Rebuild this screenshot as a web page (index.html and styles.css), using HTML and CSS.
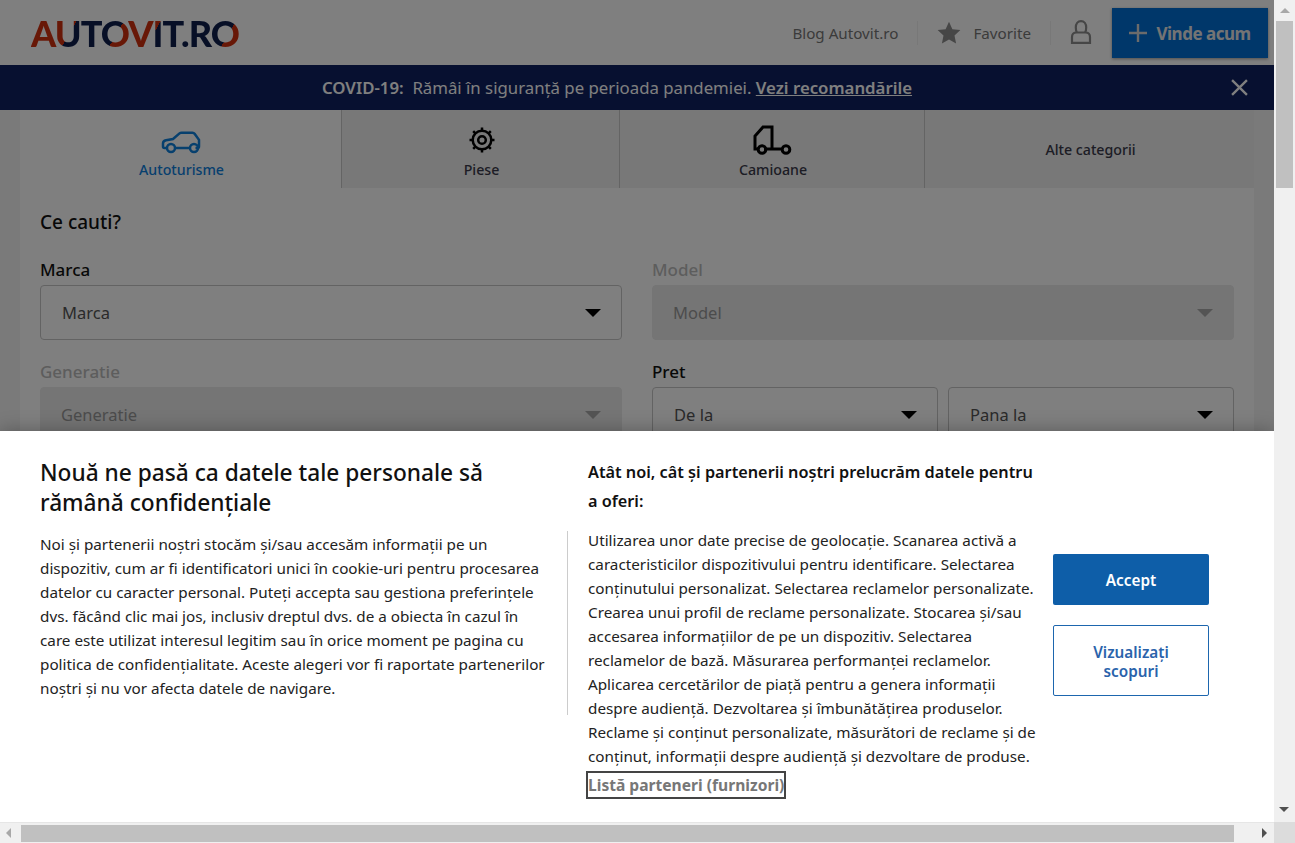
FILE: index.html
```html
<!DOCTYPE html>
<html lang="ro">
<head>
<meta charset="utf-8">
<title>Autovit.ro</title>
<link rel="stylesheet" href="styles.css">
</head>
<body>
<div class="window">
  <div class="viewport">
    <header class="header">
      <div class="logo">AUTOVIT.RO</div>
      <nav class="nav">
        <a class="nav-link">Blog Autovit.ro</a>
        <span class="nav-sep"></span>
        <a class="nav-link nav-fav">
          <svg class="star" viewBox="0 0 24 24"><path d="M12 .8l3.400 7.400 8 .9-5.900 5.500 1.600 8-7.100-4-7.100 4 1.600-8L.6 9.100l8-.9z"/></svg>
          Favorite
        </a>
        <span class="nav-sep"></span>
        <svg class="user" viewBox="0 0 22 24"><path d="M7 12.500C6 11.500 5.800 9.500 5.800 7.500c0-3.500 2-6.300 5.200-6.300s5.200 2.800 5.200 6.300c0 2-.2 4-1.200 5M2 22.800V17c0-2.800 1.800-4.500 4.500-4.500h9c2.700 0 4.500 1.700 4.500 4.500v5.800z"/></svg>
        <a class="sell">
          <svg class="plus" viewBox="0 0 18 18"><path d="M9 0v18M0 9h18"/></svg>
          Vinde acum
        </a>
      </nav>
    </header>
    <div class="banner">
      <p class="banner-text"><b>COVID-19:</b>&nbsp; Rămâi în siguranță pe perioada pandemiei. <a>Vezi recomandările</a></p>
      <svg class="banner-close" viewBox="0 0 16 16"><path d="M1 1l14 14M15 1L1 15"/></svg>
    </div>
    <main class="main">
      <div class="tabs">
        <div class="tab tab-active tab-auto">
          <svg class="tab-icon" width="42" height="24" viewBox="0 0 42 24"><path d="M6 18H3.500c-1 0-1.500-.6-1.500-1.500v-3c0-1.800 1.200-2.800 3-3.200l7-1.300 6.500-5.600c.6-.5 1.100-.7 2-.7h11c1 0 1.600.3 2.100 1l4.400 6.100v6.700c0 1-.5 1.500-1.500 1.500h-2M14 18h15"/><circle cx="10" cy="18" r="4"/><circle cx="33" cy="18" r="4"/></svg>
          <span>Autoturisme</span>
        </div>
        <div class="tab tab-piese">
          <svg class="tab-icon" width="26" height="26" viewBox="0 0 26 26"><circle cx="13" cy="13" r="9.300"/><circle cx="13" cy="13" r="3.800"/><path class="teeth" d="M13 .5v3.500M13 22v3.500M.5 13H4M22 13h3.500M4.200 4.200l2.400 2.400M19.400 19.400l2.400 2.400M21.800 4.200l-2.400 2.400M6.600 19.400l-2.400 2.400"/></svg>
          <span>Piese</span>
        </div>
        <div class="tab tab-truck">
          <svg class="tab-icon" width="40" height="30" viewBox="0 0 40 30"><path d="M6 24H2V11l8-9h9v22h-8M19 24h9"/><circle cx="9" cy="24.500" r="3.800"/><circle cx="33" cy="24.500" r="3.800"/></svg>
          <span>Camioane</span>
        </div>
        <div class="tab tab-other"><span>Alte categorii</span></div>
      </div>
      <section class="card">
        <h2 class="card-title">Ce cauti?</h2>
        <div class="form">
          <div class="field">
            <label>Marca</label>
            <div class="select"><span>Marca</span><i class="caret"></i></div>
          </div>
          <div class="field field-off">
            <label>Model</label>
            <div class="select"><span>Model</span><i class="caret"></i></div>
          </div>
          <div class="field field-off">
            <label>Generatie</label>
            <div class="select"><span>Generatie</span><i class="caret"></i></div>
          </div>
          <div class="field">
            <label>Pret</label>
            <div class="pair">
              <div class="select"><span>De la</span><i class="caret"></i></div>
              <div class="select"><span>Pana la</span><i class="caret"></i></div>
            </div>
          </div>
        </div>
      </section>
    </main>
    <div class="dim"></div>
    <aside class="cookie">
      <div class="cookie-left">
        <h1>Nouă ne pasă ca datele tale personale să rămână confidențiale</h1>
        <p>Noi și partenerii noștri stocăm și/sau accesăm informații pe un dispozitiv, cum ar fi identificatori unici în cookie-uri pentru procesarea datelor cu caracter personal. Puteți accepta sau gestiona preferințele dvs. făcând clic mai jos, inclusiv dreptul dvs. de a obiecta în cazul în care este utilizat interesul legitim sau în orice moment pe pagina cu politica de confidențialitate. Aceste alegeri vor fi raportate partenerilor noștri și nu vor afecta datele de navigare.</p>
      </div>
      <div class="cookie-rule"></div>
      <div class="cookie-right">
        <h2>Atât noi, cât și partenerii noștri prelucrăm datele pentru a oferi:</h2>
        <p>Utilizarea unor date precise de geolocație. Scanarea activă a caracteristicilor dispozitivului pentru identificare. Selectarea conținutului personalizat. Selectarea reclamelor personalizate. Crearea unui profil de reclame personalizate. Stocarea și/sau accesarea informațiilor de pe un dispozitiv. Selectarea reclamelor de bază. Măsurarea performanței reclamelor. Aplicarea cercetărilor de piață pentru a genera informații despre audiență. Dezvoltarea și îmbunătățirea produselor. Reclame și conținut personalizate, măsurători de reclame și de conținut, informații despre audiență și dezvoltare de produse.</p>
        <a class="partners">Listă parteneri (furnizori)</a>
      </div>
      <div class="cookie-actions">
        <button class="btn btn-primary">Accept</button>
        <button class="btn btn-outline">Vizualizați scopuri</button>
      </div>
    </aside>
  </div>
  <div class="vbar">
    <i class="arrow arrow-up"></i>
    <div class="vtrack"><div class="vthumb"></div></div>
    <i class="arrow arrow-down"></i>
  </div>
  <div class="hbar">
    <i class="arrow arrow-left"></i>
    <div class="htrack"><div class="hthumb"></div></div>
    <i class="arrow arrow-right"></i>
  </div>
  <div class="corner"></div>
</div>
</body>
</html>
```

FILE: styles.css
```css
* { box-sizing: border-box; }
html, body { margin: 0; height: 100%; overflow: hidden; }
body { font-family: "Noto Sans", "Open Sans", sans-serif; color: #111; background: #fff; }
h1, h2, p { margin: 0; }

.window { display: grid; grid-template-columns: 1274px 21px; grid-template-rows: 822px 21px; width: 1295px; height: 843px; }
.viewport { position: relative; overflow: hidden; background: #f4f4f4; }

.header { height: 65px; background: #fff; display: flex; align-items: flex-start; justify-content: space-between; padding: 0 6px 0 31px; }
.logo { margin-top: 14px; width: 211px; font-family: "Lato", sans-serif; font-weight: 900; font-size: 36px; line-height: 38px; letter-spacing: -.9px; white-space: nowrap; color: transparent;
  background: linear-gradient(120deg, #d0300f 0 43px, #0e1f4d 43px 84px, #d0300f 84px 116px, #0e1f4d 116px 181px, #d0300f 181px);
  -webkit-background-clip: text; background-clip: text; }
.nav { display: flex; align-items: center; height: 66px; }
.nav-link { font-size: 15.200px; color: #777; display: flex; align-items: center; }
.nav-sep { width: 1px; height: 24px; background: #f0f0f0; margin: 0 19px; }
.nav-fav { gap: 12px; }
.star { width: 24px; height: 24px; fill: #8d8d8d; }
.user { width: 22px; height: 24px; fill: none; stroke: #8d8d8d; stroke-width: 2.200; margin-right: 20px; margin-top: -2px; }
.sell { height: 50px; width: 156px; background: #006ed4; box-shadow: 0 1px 3px rgba(0,0,0,.4); color: #e8e8e8; font-weight: 700; font-size: 17px; letter-spacing: -.5px; display: flex; align-items: center; justify-content: center; gap: 9px; }
.plus { width: 18px; height: 18px; stroke: #d6d6d6; stroke-width: 2.400; fill: none; }

.banner { position: relative; height: 45px; background: #0e2060; color: #fff; display: flex; align-items: center; justify-content: center; padding-right: 40px; font-size: 16.800px; }
.banner-text b { font-weight: 600; }
.banner-text a { font-weight: 600; text-decoration: underline; }
.banner-close { position: absolute; right: 26px; top: 14px; width: 17px; height: 17px; stroke: #fff; stroke-width: 2.200; fill: none; }

.main { padding: 0 20px; }
.tabs { display: grid; grid-template-columns: 321px 278px 305px 330px; height: 78px; background: #f0f0f0; }
.tab { display: flex; flex-direction: column; align-items: center; justify-content: flex-end; padding: 0 0 9px 2px; font-size: 14.200px; font-weight: 500; color: #3a3a4a; border-left: 1px solid #c8c8c8; }
.tab-active { border-left: 0; background: #fff; color: #0f80dc; }
.tab-icon { fill: none; stroke: #000; stroke-width: 2.500; margin-bottom: 5px; }
.tab-auto .tab-icon { stroke: #0f80dc; margin-bottom: 6px; }
.tab-piese .tab-icon { margin-bottom: 7px; }
.teeth { stroke-width: 2.500; }
.tab-truck .tab-icon { margin-bottom: 5px; stroke-width: 3; }
.tab-other { justify-content: center; padding-bottom: 0; }
.card { background: #fff; padding: 22px 20px 0; height: 500px; }
.card-title { font-size: 19px; font-weight: 500; line-height: 24px; color: #111; margin-bottom: 25px; }
.form { display: grid; grid-template-columns: 582px 582px; column-gap: 30px; row-gap: 21px; }
.field label { display: block; font-size: 17px; font-weight: 500; line-height: 22px; margin-bottom: 4px; color: #111; }
.field-off label { color: #bbb; }
.select { height: 55px; border: 1px solid #c6c6c6; border-radius: 4px; display: flex; align-items: center; justify-content: space-between; padding: 0 20px 0 21px; font-size: 16.500px; color: #555; background: #fff; }
.field-off .select { background: #eaeaea; border-color: #eaeaea; color: #999; padding-left: 20px; }
.caret { width: 0; height: 0; border-left: 8px solid transparent; border-right: 8px solid transparent; border-top: 8px solid #000; }
.field-off .caret { border-top-color: #a8a8a8; }
.pair { display: grid; grid-template-columns: 1fr 1fr; column-gap: 10px; }

.dim { position: absolute; inset: 0; background: rgba(0,0,0,.5); }
.cookie { position: absolute; left: 0; right: 0; bottom: 0; height: 391px; background: #fff; box-shadow: 0 0 18px rgba(0,0,0,.3); display: flex; align-items: flex-start; padding: 27px 65px 0 40px; color: #222; }
.cookie-left { width: 508px; flex: none; }
.cookie-left h1 { font-size: 22.700px; font-weight: 500; line-height: 30px; color: #111; width: 470px; margin-bottom: 14px; }
.cookie-left p { font-size: 15.250px; line-height: 24px; }
.cookie-right p { font-size: 15.250px; line-height: 24px; margin-right: -8px; }
.cookie-rule { width: 1px; height: 184px; background: #ccc; margin: 73px 20px 0 19px; flex: none; }
.cookie-right { width: 445px; flex: none; }
.cookie-right h2 { font-size: 16.250px; font-weight: 600; line-height: 29px; color: #111; margin-bottom: 12px; }
.partners { display: inline-block; margin: 3px 0 0 -2px; border: 2px solid #444; font-size: 15.600px; font-weight: 700; line-height: 24px; color: #777; white-space: nowrap; }
.cookie-actions { width: 156px; margin-left: 20px; margin-top: 96px; flex: none; display: flex; flex-direction: column; gap: 20px; }
.btn { font-family: inherit; font-size: 15.300px; font-weight: 600; border-radius: 2px; line-height: 19.500px; width: 156px; padding-top: 4px; }
.btn-primary { height: 51px; background: #0e5ea8; color: #fff; border: 0; }
.btn-outline { height: 71px; background: #fff; color: #2a63ab; border: 1px solid #1d66ae; padding: 3px 30px 0; }

.vbar { background: #f0f0f0; display: flex; flex-direction: column; align-items: center; }
.hbar { background: #f0f0f0; display: flex; align-items: center; border-top: 1px solid #e6e6e6; }
.corner { background: #dcdcdc; }
.vtrack { flex: 1; width: 17px; }
.vthumb { width: 17px; height: 167px; background: #c0c0c0; }
.htrack { flex: 1; height: 17px; }
.hthumb { width: 1213px; height: 17px; background: #c0c0c0; }
.arrow { display: block; width: 21px; height: 21px; flex: none; position: relative; }
.arrow::after { content: ""; position: absolute; left: 6px; top: 8px; width: 0; height: 0; border: 5px solid transparent; border-top-width: 0; border-bottom-color: #a8a8a8; }
.arrow-down::after { top: 6px; left: 5px; border-bottom-width: 0; border-top-width: 5px; border-top-color: #505050; border-bottom-color: transparent; }
.arrow-left::after { left: 6px; top: 5px; border-left-width: 0; border-right-width: 5px; border-bottom-width: 5px; border-top-width: 5px; border-bottom-color: transparent; border-right-color: #a8a8a8; }
.arrow-right::after { left: 9px; top: 5px; border-right-width: 0; border-left-width: 5px; border-bottom-width: 5px; border-top-width: 5px; border-bottom-color: transparent; border-left-color: #505050; }
```
